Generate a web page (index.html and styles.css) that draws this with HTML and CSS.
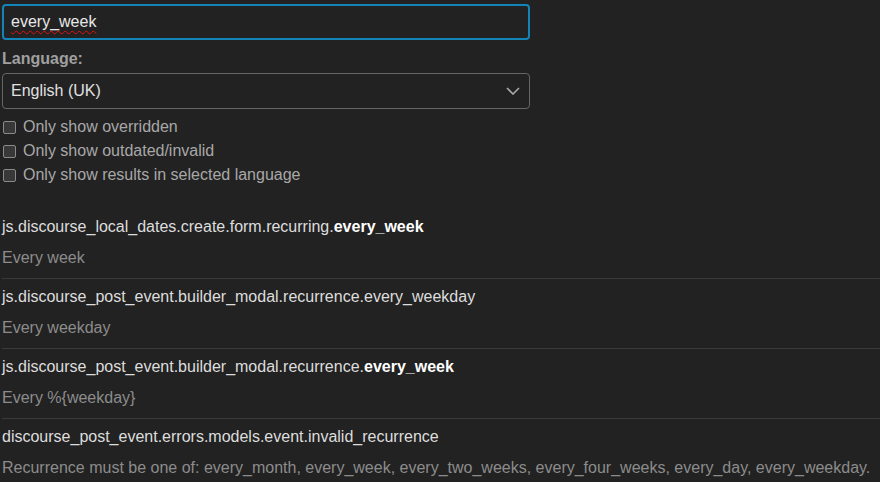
FILE: index.html
```html
<!DOCTYPE html>
<html lang="en">
<head>
    <meta charset="UTF-8">
    <meta name="viewport" content="width=device-width, initial-scale=1.0">
    <title>Site Texts</title>
    <link rel="stylesheet" href="styles.css">
</head>
<body>
    <div class="filters">
        <div class="search-box"><span class="misspelled">every_week</span></div>

        <label class="field-label">Language:</label>
        <div class="select-box">
            <span>English (UK)</span>
            <svg class="chevron" width="14" height="8" viewBox="0 0 14 8">
                <path d="M1 1 L7 7 L13 1" fill="none" stroke="#a8a8a8" stroke-width="1.6"/>
            </svg>
        </div>

        <div class="check-row"><span class="checkbox"></span>Only show overridden</div>
        <div class="check-row"><span class="checkbox"></span>Only show outdated/invalid</div>
        <div class="check-row"><span class="checkbox"></span>Only show results in selected language</div>
    </div>

    <div class="results">
        <div class="entry">
            <div class="entry-key">js.discourse_local_dates.create.form.recurring.<b>every_week</b></div>
            <div class="entry-value">Every week</div>
        </div>
        <div class="entry">
            <div class="entry-key">js.discourse_post_event.builder_modal.recurrence.every_weekday</div>
            <div class="entry-value">Every weekday</div>
        </div>
        <div class="entry">
            <div class="entry-key">js.discourse_post_event.builder_modal.recurrence.<b>every_week</b></div>
            <div class="entry-value">Every %{weekday}</div>
        </div>
        <div class="entry">
            <div class="entry-key">discourse_post_event.errors.models.event.invalid_recurrence</div>
            <div class="entry-value">Recurrence must be one of: every_month, every_week, every_two_weeks, every_four_weeks, every_day, every_weekday.</div>
        </div>
    </div>
</body>
</html>
```

FILE: styles.css
```css
body {
    margin: 0;
    padding: 0 0 0 2px;
    background-color: #222222;
    font-family: "Liberation Sans", Arial, sans-serif;
    font-size: 16px;
    line-height: 20px;
    color: #dddddd;
    overflow: hidden;
}
.filters {
    width: 528px;
    display: flex;
    flex-direction: column;
}
.search-box {
    margin-top: 4px;
    height: 36px;
    box-sizing: border-box;
    border: 2px solid #1384b8;
    border-radius: 4px;
    padding: 0 7px;
    display: flex;
    align-items: center;
    color: #e8e8e8;
}
.misspelled {
    text-decoration: underline wavy #e01010;
    text-decoration-thickness: 1px;
    text-underline-offset: 3px;
}
.field-label {
    margin-top: 9px;
    font-weight: bold;
    color: #a0a0a0;
}
.select-box {
    margin-top: 4px;
    height: 36px;
    box-sizing: border-box;
    border: 1px solid #666666;
    border-radius: 4px;
    padding: 0 8px;
    display: flex;
    align-items: center;
    justify-content: space-between;
    color: #e0e0e0;
}
.chevron {
    margin-right: 1px;
}
.check-row {
    height: 24px;
    display: flex;
    align-items: center;
    color: #a8a8a8;
}
.filters .select-box + .check-row {
    margin-top: 6px;
}
.checkbox {
    width: 13px;
    height: 13px;
    box-sizing: border-box;
    margin: 0 7px 0 1px;
    border: 1px solid #8a8a8a;
    border-radius: 2px;
    background-color: #383838;
}
.results {
    margin-top: 22px;
}
.entry {
    padding: 8px 0 10px;
    border-bottom: 1px solid #3a3a3a;
}
.entry:last-child {
    border-bottom: none;
}
.entry-key {
    white-space: nowrap;
}
.entry-key b {
    color: #ffffff;
}
.entry-value {
    margin-top: 11px;
    color: #8c8c8c;
    white-space: nowrap;
}
```
